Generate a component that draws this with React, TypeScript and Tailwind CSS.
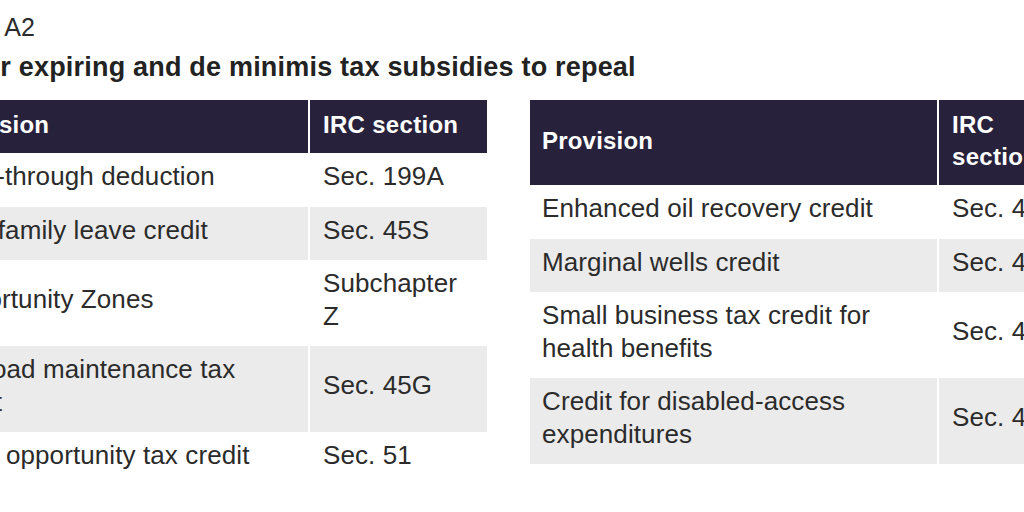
import React from 'react';

type Row = { provision: string; section: string; shaded?: boolean };

const leftRows: Row[] = [
    { provision: 'Pass-through deduction', section: 'Sec. 199A' },
    { provision: 'Paid family leave credit', section: 'Sec. 45S', shaded: true },
    { provision: 'Opportunity Zones', section: 'Subchapter Z' },
    { provision: 'Railroad maintenance tax credit', section: 'Sec. 45G', shaded: true },
    { provision: 'Work opportunity tax credit', section: 'Sec. 51' }
];

const rightRows: Row[] = [
    { provision: 'Enhanced oil recovery credit', section: 'Sec. 43' },
    { provision: 'Marginal wells credit', section: 'Sec. 45I', shaded: true },
    { provision: 'Small business tax credit for health benefits', section: 'Sec. 45R' },
    { provision: 'Credit for disabled-access expenditures', section: 'Sec. 44', shaded: true }
];

interface TableProps {
    rows: Row[];
}

// column 1 width comes from the --c1 variable set on the wrapper
const SubsidyTable = ({ rows }: TableProps) => {
    return (
        <div className="flex flex-col w-full">
            <div className="flex gap-[2px] bg-white">
                <div className="flex items-center bg-[#28213b] text-white font-bold text-[24px] leading-[32px] tracking-[0.2px] px-[12px] pt-[9px] pb-[12px] w-[var(--c1)] shrink-0">
                    Provision
                </div>
                <div className="flex items-center flex-1 bg-[#28213b] text-white font-bold text-[24px] leading-[32px] tracking-[0.3px] px-[13px] pt-[9px] pb-[12px]">
                    IRC section
                </div>
            </div>
            {rows.map((row) => (
                <div key={row.provision} className="flex gap-[2px] bg-white">
                    <div
                        className={`flex items-center w-[var(--c1)] shrink-0 text-[26px] leading-[32.5px] tracking-[0.1px] text-[#2b2b2b] px-[12px] pt-[7px] pb-[14px] ${
                            row.shaded ? 'bg-[#ebebeb]' : 'bg-white'
                        }`}
                    >
                        {row.provision}
                    </div>
                    <div
                        className={`flex items-center flex-1 text-[26px] leading-[32.5px] tracking-[0.1px] text-[#2b2b2b] px-[13px] pt-[7px] pb-[14px] ${
                            row.shaded ? 'bg-[#ebebeb]' : 'bg-white'
                        }`}
                    >
                        {row.section}
                    </div>
                </div>
            ))}
        </div>
    );
};

const App = () => {
    return (
        <div className="w-[1024px] h-[512px] overflow-hidden bg-white font-['Liberation_Sans',Arial,sans-serif]">
            <div className="ml-[-64px] pt-[12px] w-[1200px]">
                <p className="text-[25px] leading-[30px] text-[#2b2b2b] pl-[3px]">Table A2</p>
                <h1 className="mt-[9px] text-[27px] leading-[32px] font-bold text-[#222] tracking-[0.2px] pl-[2px]">
                    Other expiring and de minimis tax subsidies to repeal
                </h1>
                <div className="flex items-start gap-[43px] mt-[17px] ml-[-10px]">
                    <div className="w-[561px] shrink-0 [--c1:382px]">
                        <SubsidyTable rows={leftRows} />
                    </div>
                    <div className="w-[549px] shrink-0 [--c1:407px]">
                        <SubsidyTable rows={rightRows} />
                    </div>
                </div>
            </div>
        </div>
    );
};

export default App;
